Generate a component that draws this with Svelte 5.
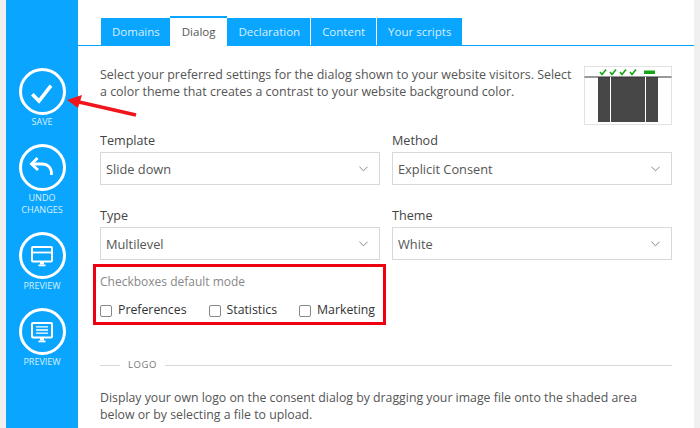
<script lang="ts">
  const tabs = ['Domains', 'Dialog', 'Declaration', 'Content', 'Your scripts'];
  const fields = [
    { label: 'Template', value: 'Slide down' },
    { label: 'Method', value: 'Explicit Consent' },
    { label: 'Type', value: 'Multilevel' },
    { label: 'Theme', value: 'White' }
  ];
  const modes = ['Preferences', 'Statistics', 'Marketing'];
</script>

<div class="page">
  <aside class="sidebar">
    <button class="action">
      <span class="circle">
        <svg viewBox="0 0 28 28" width="28" height="28"><path d="M4.300 16.300 L11 23 L23 7.700" fill="none" stroke="#fff" stroke-width="3.600" /></svg>
      </span>
      <span class="caption">SAVE</span>
    </button>
    <button class="action">
      <span class="circle">
        <svg viewBox="0 0 28 28" width="28" height="28">
          <path d="M5 10 H14 C20 10 24 14 23.500 21" fill="none" stroke="#fff" stroke-width="2.800" />
          <path d="M9.500 4 L3.500 10 L10 16" fill="none" stroke="#fff" stroke-width="2.800" />
        </svg>
      </span>
      <span class="caption">UNDO<br />CHANGES</span>
    </button>
    <button class="action">
      <span class="circle">
        <svg viewBox="0 0 28 28" width="28" height="28">
          <rect x="4" y="5" width="20" height="14.500" rx="1" fill="none" stroke="#fff" stroke-width="2" />
          <path d="M5 10.500 H23" stroke="#fff" stroke-width="1.800" />
          <rect x="12" y="20" width="4" height="2.500" fill="#fff" />
          <rect x="10.500" y="22.500" width="7" height="1.800" fill="#fff" />
        </svg>
      </span>
      <span class="caption">PREVIEW</span>
    </button>
    <button class="action">
      <span class="circle">
        <svg viewBox="0 0 28 28" width="28" height="28">
          <rect x="4" y="5" width="20" height="14.500" rx="1" fill="none" stroke="#fff" stroke-width="2" />
          <path d="M8 8.900 H20 M8 12 H20 M8 15.200 H20" stroke="#fff" stroke-width="1.300" />
          <rect x="12" y="20" width="4" height="2.500" fill="#fff" />
          <rect x="10.500" y="22.500" width="7" height="1.800" fill="#fff" />
        </svg>
      </span>
      <span class="caption">PREVIEW</span>
    </button>
  </aside>

  <main class="content">
    <nav class="tabs">
      {#each tabs as tab}
        <span class="tab" class:active={tab === 'Dialog'}>{tab}</span>
      {/each}
    </nav>

    <div class="body">
      <div class="intro">
        <p>Select your preferred settings for the dialog shown to your website visitors. Select a color theme that creates a contrast to your website background color.</p>
        <svg class="thumb" viewBox="0 0 88 59" width="88" height="59">
          <rect x="0.500" y="0.500" width="87" height="58" fill="#fff" stroke="#e2e2e2" />
          <rect x="14" y="11" width="60" height="45" fill="#474747" />
          <path d="M0.500 11 H87.500" stroke="#333" stroke-width="1" />
          <path d="M26.500 11 V56 M61.500 11 V56" stroke="#fff" stroke-width="1" />
          <path d="M16 6 L18 8.500 L22 3.500 M26 6 L28 8.500 L32 3.500 M36 6 L38 8.500 L42 3.500 M46 6 L48 8.500 L52 3.500" fill="none" stroke="#14a514" stroke-width="1.600" />
          <rect x="60" y="4.500" width="11" height="3.500" fill="#14a514" />
        </svg>
      </div>

      <div class="fields">
        {#each fields as field}
          <div class="field">
            <span class="label">{field.label}</span>
            <div class="select">
              <span>{field.value}</span>
              <svg viewBox="0 0 10 6" width="9" height="6"><path d="M0.500 0.500 L5 5 L9.500 0.500" fill="none" stroke="#777" stroke-width="1" /></svg>
            </div>
          </div>
        {/each}
      </div>

      <div class="modes">
        <span class="modes-label">Checkboxes default mode</span>
        <div class="mode-row">
          {#each modes as mode}
            <label class="mode">
              <span class="box"></span>
              {mode}
            </label>
          {/each}
        </div>
        <div class="highlight"></div>
      </div>

      <div class="divider">
        <span>LOGO</span>
      </div>

      <p class="logo-text">Display your own logo on the consent dialog by dragging your image file onto the shaded area below or by selecting a file to upload.</p>
    </div>
  </main>

  <svg class="arrow" viewBox="0 0 80 40" width="80" height="40">
    <path d="M71 25 L14 12" stroke="#f0141c" stroke-width="3.500" fill="none" />
    <path d="M2 10 L17 5 L13 18 Z" fill="#f0141c" />
  </svg>
</div>

<style>
  :global(body) {
    margin: 0;
    background: #f0f0f0;
  }

  .page {
    position: relative;
    display: flex;
    width: 700px;
    height: 428px;
    overflow: hidden;
    padding: 0 6px;
    box-sizing: border-box;
    font-family: 'Open Sans', sans-serif;
    color: #555;
  }

  .sidebar {
    width: 72px;
    flex-shrink: 0;
    background: #0aa5ff;
    display: flex;
    flex-direction: column;
    align-items: center;
    padding-top: 68px;
    box-sizing: border-box;
  }

  .action {
    display: flex;
    flex-direction: column;
    align-items: center;
    background: none;
    border: none;
    padding: 0;
    margin-bottom: 16px;
    color: #fff;
    font-family: inherit;
  }

  .circle {
    width: 47px;
    height: 47px;
    box-sizing: border-box;
    border: 3px solid #fff;
    border-radius: 50%;
    display: flex;
    align-items: center;
    justify-content: center;
  }

  .caption {
    font-size: 9px;
    line-height: 12px;
    margin-top: 1px;
    color: #d8f0ff;
    text-align: center;
  }

  .content {
    flex: 1;
    min-width: 0;
    background: #fff;
  }

  .tabs {
    display: flex;
    padding: 18px 0 0 23px;
    height: 27px;
    border-bottom: 1px solid #0aa5ff;
  }

  .tab {
    height: 27px;
    padding: 0 11px;
    background: #0aa5ff;
    color: #d8f0ff;
    font-size: 11.500px;
    line-height: 27px;
  }

  .tab:first-child {
    padding-right: 10px;
  }

  .tab:nth-child(3) {
    padding-right: 10px;
    border-right: 1px solid #fff;
  }

  .tab:nth-child(4) {
    border-right: 1px solid #fff;
  }

  .tab.active {
    height: 27px;
    margin-top: -2px;
    padding: 0 12px 3px;
    background: #fff;
    color: #555;
    border-top: 2px solid #0aa5ff;
  }

  .body {
    padding: 0 22px;
  }

  .intro {
    display: flex;
    justify-content: space-between;
    align-items: flex-start;
    height: 84px;
    padding-top: 20px;
    box-sizing: border-box;
  }

  .intro p {
    margin: 0;
    font-size: 12.450px;
    line-height: 17px;
    color: #555;
    width: 478px;
  }

  .thumb {
    flex-shrink: 0;
  }

  .fields {
    display: grid;
    grid-template-columns: 280px 280px;
    gap: 22px 12px;
    padding-top: 2px;
  }

  .field {
    display: flex;
    flex-direction: column;
  }

  .label {
    font-size: 12.600px;
    line-height: 18px;
    color: #444;
    margin-bottom: 2px;
  }

  .select {
    height: 33px;
    box-sizing: border-box;
    border: 1px solid #d8d8d8;
    display: flex;
    align-items: center;
    justify-content: space-between;
    padding: 1px 11px 0 5px;
    font-size: 12.800px;
    color: #555;
  }

  .modes {
    position: relative;
    padding-top: 13px;
  }

  .modes-label {
    display: block;
    font-size: 12px;
    line-height: 17px;
    color: #888;
  }

  .mode-row {
    display: flex;
    margin-top: 11px;
  }

  .mode {
    display: flex;
    align-items: center;
    gap: 6px;
    font-size: 12.300px;
    line-height: 17px;
    color: #333;
    margin-right: 22px;
  }

  .box {
    width: 12px;
    height: 12px;
    box-sizing: border-box;
    border: 1px solid #888;
    border-radius: 2px;
    margin-top: 3px;
  }

  .highlight {
    position: absolute;
    left: -7px;
    top: 4px;
    width: 293px;
    height: 61px;
    box-sizing: border-box;
    border: 3px solid #ee0010;
  }

  .divider {
    display: flex;
    align-items: center;
    gap: 8px;
    margin-top: 40px;
    font-size: 9.500px;
    line-height: 14px;
    letter-spacing: 0.06em;
    color: #777;
  }

  .divider::before {
    content: '';
    width: 20px;
    height: 1px;
    background: #d8d8d8;
  }

  .divider::after {
    content: '';
    flex: 1;
    height: 1px;
    background: #d8d8d8;
  }

  .logo-text {
    margin: 17px 0 0;
    width: 560px;
    font-size: 12.300px;
    line-height: 17px;
    color: #555;
  }

  .arrow {
    position: absolute;
    left: 65px;
    top: 90px;
  }
</style>
